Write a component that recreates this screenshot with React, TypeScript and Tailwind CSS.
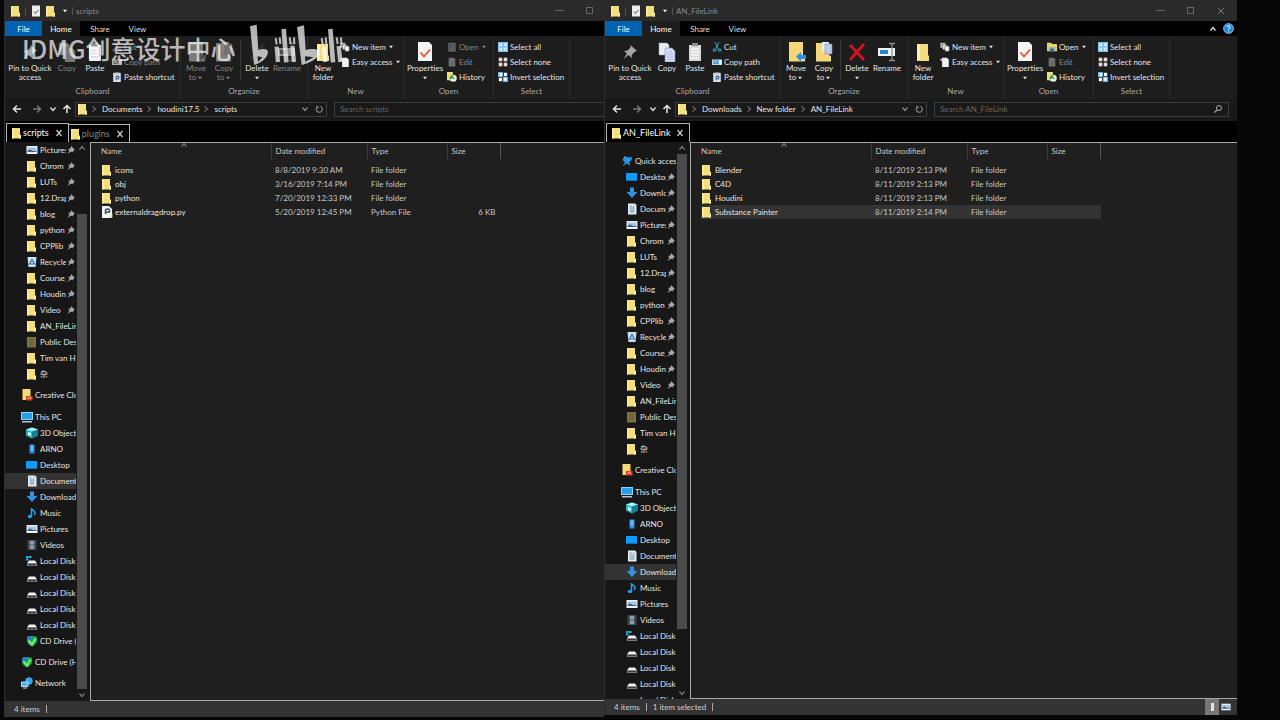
import type { ReactNode } from 'react';
import clsx from 'clsx';

type IconProps = {
  className?: string;
};

type TreeItem = {
  label: string;
  icon: string;
  pinned?: boolean;
  root?: boolean;
};

type FileRow = {
  name: string;
  icon: string;
  date: string;
  type: string;
  size?: string;
};

type ExplorerProps = {
  title: string;
  path: string[];
  tabs: string[];
  tree: TreeItem[];
  treeClassName: string;
  current: string;
  files: FileRow[];
  selectedFile?: string;
  status: string[];
  hasSelection?: boolean;
  covered?: boolean;
  trackClassName: string;
};

// TREE DATA
const pinnedFolders: TreeItem[] = [
  'Chrom',
  'LUTs',
  '12.Drag',
  'blog',
  'python',
  'CPPlib',
].map((label) => ({ label, icon: 'folder', pinned: true }));

const quickAccess: TreeItem[] = [
  { label: 'Pictures', icon: 'pictures', pinned: true },
  ...pinnedFolders,
  { label: 'Recycle', icon: 'recycle', pinned: true },
  { label: 'Course_', icon: 'folder', pinned: true },
  { label: 'Houdini', icon: 'folder', pinned: true },
  { label: 'Video', icon: 'folder', pinned: true },
  { label: 'AN_FileLink', icon: 'folder' },
  { label: 'Public Desk', icon: 'dimFolder' },
  { label: 'Tim van H', icon: 'folder' },
  { label: '杂', icon: 'folder' },
  { label: 'Creative Clo', icon: 'cloud', root: true },
  { label: 'This PC', icon: 'pc', root: true },
  { label: '3D Objects', icon: 'cube' },
  { label: 'ARNO', icon: 'phone' },
  { label: 'Desktop', icon: 'desktop' },
  { label: 'Documents', icon: 'document' },
  { label: 'Downloads', icon: 'download' },
  { label: 'Music', icon: 'music' },
  { label: 'Pictures', icon: 'pictures' },
  { label: 'Videos', icon: 'video' },
  { label: 'Local Disk', icon: 'systemDisk' },
  { label: 'Local Disk', icon: 'disk' },
  { label: 'Local Disk', icon: 'disk' },
  { label: 'Local Disk', icon: 'disk' },
  { label: 'Local Disk', icon: 'disk' },
  { label: 'CD Drive (', icon: 'cd' },
  { label: 'CD Drive (H', icon: 'cd', root: true },
  { label: 'Network', icon: 'network', root: true },
];

const fullTree: TreeItem[] = [
  { label: 'Quick access', icon: 'pin', root: true },
  { label: 'Desktop', icon: 'desktop', pinned: true },
  { label: 'Downloads', icon: 'download', pinned: true },
  { label: 'Documents', icon: 'document', pinned: true },
  ...quickAccess,
];

// FILE DATA
const scriptFiles: FileRow[] = [
  { name: 'icons', icon: 'folder', date: '8/8/2019 9:30 AM', type: 'File folder' },
  { name: 'obj', icon: 'folder', date: '3/16/2019 7:14 PM', type: 'File folder' },
  { name: 'python', icon: 'folder', date: '7/20/2019 12:33 PM', type: 'File folder' },
  {
    name: 'externaldragdrop.py',
    icon: 'python',
    date: '5/20/2019 12:45 PM',
    type: 'Python File',
    size: '6 KB',
  },
];

const linkFiles: FileRow[] = [
  { name: 'Blender', icon: 'folder', date: '8/11/2019 2:13 PM', type: 'File folder' },
  { name: 'C4D', icon: 'folder', date: '8/11/2019 2:13 PM', type: 'File folder' },
  { name: 'Houdini', icon: 'folder', date: '8/11/2019 2:13 PM', type: 'File folder' },
  {
    name: 'Substance Painter',
    icon: 'folder',
    date: '8/11/2019 2:14 PM',
    type: 'File folder',
  },
];

// SMALL ICONS, DRAWN ON A 12 UNIT GRID
const disk = (
  <>
    <path d="M3 5.5h6l2 3H1z" fill="#f2f2f2" />
    <path d="M1 8.3h10v2.7H1z" fill="#8c8c8c" />
    <path d="M2 9.2h8v1H2z" fill="#222" />
  </>
);

const glyphs: Record<string, ReactNode> = {
  folder: (
    <>
      <path d="M1 1h8v6.500l1 .5v3.500H1z" fill="#f3df7c" />
      <path d="M9 7.500l1 .5v3.500H8z" fill="#fff0a8" />
      <path d="M1 1h1.500v10.500H1z" fill="#ffee9f" />
    </>
  ),
  dimFolder: (
    <>
      <path d="M1 1h9v10.500H1z" fill="#7c7444" />
      <path d="M3 2h5v8H3z" fill="#6d673f" />
    </>
  ),
  pictures: (
    <>
      <path d="M.5 2h11v8H.5z" fill="#e9f1f8" />
      <path d="M1.500 3.500h9V7h-9z" fill="#a9c3e0" />
      <path d="M1.500 7 4 5.500l3 1.500h3.500v1h-9z" fill="#3e6385" />
    </>
  ),
  recycle: (
    <>
      <path d="M1.500 1h9l-1 10h-7z" fill="#cfdfea" />
      <path d="m6 3.500 2.500 4.500h-5z" fill="none" stroke="#2676b8" strokeWidth="1.200" />
    </>
  ),
  cloud: (
    <>
      <path d="M1.500 0h8v11h-8z" fill="#f6d977" />
      <path d="M5 7h6.500v4.500H5z" fill="#e0401f" />
      <path d="M6.500 9.500q1.500-2 3.500 0" fill="none" stroke="#fff" strokeWidth=".8" />
    </>
  ),
  pc: (
    <>
      <path d="M0 1h12v8H0z" fill="#8ed3fb" />
      <path d="M1 2h10v6H1z" fill="#259fea" />
      <path d="M1 10h10v1.500H1z" fill="#b9c7d0" />
    </>
  ),
  cube: (
    <>
      <path d="m0 2.500 6-2 6 2v6l-6 3-6-3z" fill="#20b5cf" />
      <path d="m0 2.500 6-2 6 2-6 2z" fill="#a8f2f8" />
      <path d="M6 4.500v7l6-3v-6z" fill="#0f8299" />
      <path d="m2 5 3 1v3L2 8z" fill="#e5fdff" />
    </>
  ),
  phone: (
    <>
      <path d="M3.500 1.500h5v9h-5z" fill="#2d8fe3" />
      <path d="M4.500 2.500h3v5h-3z" fill="#73b9f1" />
    </>
  ),
  desktop: (
    <>
      <path d="M0 2h11v8H0z" fill="#119af6" />
      <path d="M0 9h11v1H0z" fill="#0b6db6" />
    </>
  ),
  document: (
    <>
      <path d="M2 .5h7l1.500 1.500v9.500H2z" fill="#e8eef2" />
      <path d="M3.500 3h2M3.500 5h5M3.500 7h5M3.500 9h5M7 3h1.500" stroke="#5f8fae" strokeWidth="1" />
    </>
  ),
  download: <path d="M4 .5h4V5h3.500L6 11 .5 5H4z" fill="#3391e0" />,
  music: (
    <>
      <path d="M5.500 1v8M5.500 1.500c1 2 3.500 2 3.500 4.500 0 1-.5 1.500-1 2" fill="none" stroke="#1fa0ea" strokeWidth="1.500" />
      <ellipse cx="4" cy="9.500" rx="2.200" ry="1.700" fill="#1fa0ea" />
    </>
  ),
  video: (
    <>
      <path d="M1.500 1h9v10h-9z" fill="#4d545d" />
      <path d="M4 2h4v3.500H4zM4 6.500h4V10H4z" fill="#8f9bb3" />
      <path d="M2.500 1v10M9.500 1v10" stroke="#222" strokeDasharray="1 1" />
    </>
  ),
  disk,
  systemDisk: (
    <>
      <path d="M0 1h2.500v2H0zM3 1h2.500v2H3zM0 3.500h2.500v2H0z" fill="#27b0ea" />
      {disk}
    </>
  ),
  cd: (
    <>
      <path d="M1 2q5-2 10 0v5q-2 3-5 4.500Q2 10 1 6z" fill="#1fa85a" />
      <path d="M1 2q3-1.500 6-1L5 6 1.500 7z" fill="#2d7fc7" />
      <path d="m2.500 5.500 3.500 4 3.500-6" fill="none" stroke="#7cf05c" strokeWidth="2" />
    </>
  ),
  network: (
    <>
      <circle cx="8" cy="4" r="3.700" fill="#3aa3e6" />
      <path d="M0 4.500h7.500V10H0z" fill="#a9dcfa" />
      <path d="M1 5.500h5.500V9H1z" fill="#5ab2ec" />
      <path d="M2 11h4" stroke="#c8d6df" />
    </>
  ),
  pin: (
    <path d="m3.500 1 4 1.500L11 2l-.5 3-2 2 .5 3.500-3-2L1.500 11 4 7.500 1.500 5z" fill="#2596e8" />
  ),
  python: (
    <>
      <path d="M1 0h7l3 3v9H1z" fill="#f4f4f4" />
      <path d="M4.500 7V4.500q0-1.500 2-1.500t2 1.500V6H6Q4.500 6 4.500 8" fill="none" stroke="#31536b" strokeWidth="1.500" />
      <path d="M6 11.500q5.500 0 5.500-5.500v5.500z" fill="#e8dc4a" />
    </>
  ),
  clipCut: (
    <path d="m3.500 0 4 8M8.500 0l-4 8M5 8.500H1.500V11H4zM7 8.500h3.500V11H8z" fill="none" stroke="#3fa1bd" strokeWidth="1.200" />
  ),
  clipPath: (
    <>
      <path d="M0 3h12v6.500H0z" fill="#dcecf8" />
      <path d="M1 4h7v4.500H1z" fill="#3a93d6" />
      <path d="M2 7 4 5l2 2" fill="none" stroke="#fff" />
    </>
  ),
  clipShortcut: (
    <>
      <path d="M1.500 1h9v11h-9z" fill="#dfe3ea" />
      <path d="M4 0h4v2H4z" fill="#8c8c8c" />
      <path d="M5 10V5h3v3H6" fill="none" stroke="#2a4b96" strokeWidth="1.300" />
    </>
  ),
  newItem: (
    <>
      <path d="M.5 1h6v6h-6z" fill="#bdbdbd" />
      <path d="M3 3h5v6H3z" fill="#e6e6e6" stroke="#555" strokeWidth=".6" />
      <path d="M6 5h5v6H6z" fill="#fff" stroke="#555" strokeWidth=".6" />
    </>
  ),
  easyAccess: (
    <>
      <path d="M2.500 1h6l2 2v9h-8z" fill="#f1f1f1" />
      <path d="m0 2 4 .5-2.500 3z" fill="#d7d7d7" />
    </>
  ),
  openFolder: (
    <>
      <path d="M0 1h5l1 1.500h6V11H0z" fill="#e5d45f" />
      <path d="M2 6h8v5H2z" fill="#8fb6c4" />
      <path d="M4 8h4v3H4z" fill="#385f75" />
    </>
  ),
  openDisabled: (
    <>
      <path d="M1.500 1h9v10.500h-9z" fill="#777" />
      <path d="M3 3.500h3M3 6h3M3 8.500h3M8 3.500h1.500M8 6h1.500M8 8.500h1.500" stroke="#333" />
    </>
  ),
  edit: (
    <>
      <path d="M2 1h6l2 2v8.500H2z" fill="#848484" />
      <path d="m5 9 5-5" stroke="#555" strokeWidth="1.200" />
    </>
  ),
  history: (
    <>
      <path d="M0 0h7v10H0z" fill="#f2dd76" />
      <circle cx="7.500" cy="7.500" r="4.200" fill="#eef4ea" />
      <path d="M3.500 9a4 4 0 0 1 4-5.500l-1 4z" fill="#31a042" />
      <path d="M7.500 5.500v2.300h2" fill="none" stroke="#36793b" />
    </>
  ),
  selectAll: (
    <>
      <path d="M0 0h12v12H0z" fill="#7fc0ee" />
      <path d="M1.500 1.500H5V5H1.500zM7 1.500h3.500V5H7zM1.500 7H5v3.500H1.500zM7 7h3.500v3.500H7z" fill="#d3ecfd" />
    </>
  ),
  selectNone: (
    <path d="M1 1h4v4H1zM7 1h4v4H7zM1 7h4v4H1zM7 7h4v4H7z" fill="#f3f0ee" stroke="#a07c74" strokeWidth=".5" />
  ),
  selectInvert: (
    <>
      <path d="M0 0h6v6H0zM6 6h6v6H6z" fill="#6db4e8" />
      <path d="M1.500 1.500H5V5H1.500zM7 1h4v4H7zM1 7h4v4H1zM7 7h3.500v3.500H7z" fill="#eef8ff" />
    </>
  ),
  check: (
    <>
      <path d="M2 .5h8v11H2z" fill="#ececec" />
      <path d="m4 6.500 1.500 2L8.500 5" fill="none" stroke="#555" />
    </>
  ),
};

// LARGE RIBBON ICONS, DRAWN ON A 20 UNIT GRID
const largeGlyphs: Record<string, ReactNode> = {
  pin: (
    <path d="m10.500 3 6.500 6-2 .5-3 3-.5 3.500-3-3L3.500 17l3.500-5.500L4 9l3.500-.5 3-3z" fill="#a6a6a6" />
  ),
  copy: (
    <>
      <path d="M2 1h8l2 2v10H2z" fill="#e9edf4" stroke="#9aa3b5" strokeWidth=".5" />
      <path d="M8 6h7l3 3v11H8z" fill="#cfdcf6" stroke="#7d92c4" strokeWidth=".6" />
      <path d="M10 10h5M10 12.500h6M10 15h6M10 17.500h6" stroke="#a9bce8" strokeWidth=".8" />
    </>
  ),
  paste: (
    <>
      <path d="M4 3h12v16H4z" fill="#d8d8d8" />
      <path d="M7 1h6v3H7z" fill="#8a8a8a" />
      <path d="M6 7h8M6 10h8M6 13h8M6 16h8" stroke="#f8f8f8" strokeWidth="1.500" />
    </>
  ),
  moveTo: (
    <>
      <path d="M3 0h14v14l2 1v4.500H3z" fill="#f5d77a" />
      <path d="M10 14.500 15 10v3h5v4h-5v3z" fill="#2f8fdb" />
    </>
  ),
  copyTo: (
    <>
      <path d="M2 1h13v12l2 1v5.500H2z" fill="#f5d77a" />
      <path d="M8 0h7v9H8z" fill="#e6ebf5" />
      <path d="M11 2h7v10h-7z" fill="#bdcae6" stroke="#8592b5" strokeWidth=".6" />
    </>
  ),
  remove: <path d="m3 3 14 15M17 2 3 18" stroke="#d3121f" strokeWidth="2.800" />,
  rename: (
    <>
      <path d="M1 6h17v8H1z" fill="#eef3f7" />
      <path d="M3 8h8v4H3z" fill="#2a82cf" />
      <path d="M12 1.500h6M15 2v16M12 18.500h6" stroke="#8b8b8b" strokeWidth="1.300" />
    </>
  ),
  newFolder: (
    <>
      <path d="M4 2h11v11l1 1v5H4z" fill="#f3dd82" />
      <path d="M4 2h3v15l-3 2z" fill="#fff0aa" />
    </>
  ),
  properties: (
    <>
      <path d="M3 0h11l3 3v16H3z" fill="#f4f4f4" />
      <path d="m5.500 10.500 3.500 4 6-7" fill="none" stroke="#dd5234" strokeWidth="1.800" />
    </>
  ),
};

const Icon = ({ name, className }: IconProps & { name: string }) => (
  <svg viewBox="0 0 12 12" aria-hidden="true" className={clsx('shrink-0', className)}>
    {glyphs[name]}
  </svg>
);

const PushPin = () => (
  <svg viewBox="0 0 10 10" aria-hidden="true" className="h-[10px] w-[10px] shrink-0">
    <path d="M5 1 9 5 7.500 5.500 6.500 7.500 5 6.500 1.500 9 3.500 5.500 2 4 4.500 3.500z" fill="#a9a9a9" />
  </svg>
);

const Caret = ({ className }: IconProps) => (
  <svg viewBox="0 0 6 4" aria-hidden="true" className={clsx('h-1 w-[6px] shrink-0', className)}>
    <path d="M1 .8h4L3 3.200z" fill="currentColor" />
  </svg>
);

const Chevron = ({ className }: IconProps) => (
  <svg viewBox="0 0 8 8" aria-hidden="true" className={clsx('h-2 w-2 shrink-0', className)}>
    <path d="m1.500 2.500 2.500 3 2.500-3" fill="none" stroke="currentColor" strokeWidth="1.300" />
  </svg>
);

const Arrow = ({ className }: IconProps) => (
  <svg viewBox="0 0 10 10" aria-hidden="true" className={clsx('h-[10px] w-[10px] shrink-0', className)}>
    <path d="M9 5H1.500M5 1.500 1.500 5 5 8.500" fill="none" stroke="currentColor" strokeWidth="1.500" />
  </svg>
);

type RibbonButtonProps = {
  icon: string;
  label: string;
  secondLine?: string;
  menu?: boolean;
  disabled?: boolean;
  fadedIcon?: boolean;
  className: string;
};

const LargeButton = ({
  icon,
  label,
  secondLine,
  menu,
  disabled,
  fadedIcon,
  className,
}: RibbonButtonProps) => (
  <button
    type="button"
    disabled={disabled}
    className={clsx(
      'flex shrink-0 flex-col items-center pt-[6px] leading-[9px] whitespace-nowrap',
      disabled ? 'text-[#858585]' : 'text-[#e4e4e4]',
      className
    )}
  >
    <svg
      viewBox="0 0 20 20"
      aria-hidden="true"
      className={clsx('mb-[2px] h-5 w-5', (disabled || fadedIcon) && 'opacity-50 grayscale')}
    >
      {largeGlyphs[icon]}
    </svg>
    <span>{label}</span>
    <span className="flex h-[9px] items-center gap-px">
      {secondLine}
      {menu && <Caret />}
    </span>
  </button>
);

const SmallButton = ({
  icon,
  label,
  menu,
  disabled,
}: Omit<RibbonButtonProps, 'className'>) => (
  <button
    type="button"
    disabled={disabled}
    className={clsx(
      'flex h-[15px] items-center whitespace-nowrap',
      disabled ? 'text-[#858585]' : 'text-[#e4e4e4]'
    )}
  >
    <Icon
      name={icon}
      className={clsx('mr-[2px] h-[10px] w-[10px]', disabled && 'opacity-80 grayscale')}
    />
    {label}
    {menu && <Caret className="ml-[2px]" />}
  </button>
);

const RibbonGroup = ({
  label,
  className,
  children,
}: {
  label: string;
  className: string;
  children: ReactNode;
}) => (
  <section
    className={clsx(
      'flex shrink-0 flex-col justify-between border-r border-[#2c2c2c] pb-[3px]',
      className
    )}
  >
    <menu className="flex h-12">{children}</menu>
    <h2 className="text-center leading-[10px] text-[#a8a8a8]">{label}</h2>
  </section>
);

const Ribbon = ({ hasSelection }: { hasSelection?: boolean }) => {
  const disabled = !hasSelection;

  return (
    <nav aria-label="Ribbon" className="flex h-[63px] shrink-0 overflow-hidden bg-[#1d1d1d]">
      <RibbonGroup label="Clipboard" className="w-44">
        <LargeButton icon="pin" label="Pin to Quick" secondLine="access" className="ml-[3px] w-11" />
        <LargeButton icon="copy" label="Copy" disabled={disabled} className="ml-px w-7" />
        <LargeButton icon="paste" label="Paste" className="w-7" />
        <menu className="ml-[3px] flex flex-col pt-[3px]">
          <SmallButton icon="clipCut" label="Cut" disabled={disabled} />
          <SmallButton icon="clipPath" label="Copy path" disabled={disabled} />
          <SmallButton icon="clipShortcut" label="Paste shortcut" />
        </menu>
      </RibbonGroup>
      <RibbonGroup label="Organize" className="w-[127px]">
        <LargeButton icon="moveTo" label="Move" secondLine="to" menu disabled={disabled} className="ml-px w-7" />
        <LargeButton icon="copyTo" label="Copy" secondLine="to" menu disabled={disabled} className="w-7" />
        <span className="mx-[2px] mt-1 h-10 w-px bg-[#383838]" />
        <LargeButton icon="remove" label="Delete" menu fadedIcon={disabled} className="w-7" />
        <LargeButton icon="rename" label="Rename" disabled={disabled} className="w-8" />
      </RibbonGroup>
      <RibbonGroup label="New" className="w-24">
        <LargeButton icon="newFolder" label="New" secondLine="folder" className="ml-px w-7" />
        <menu className="ml-[3px] flex flex-col pt-[3px]">
          <SmallButton icon="newItem" label="New item" menu />
          <SmallButton icon="easyAccess" label="Easy access" menu />
        </menu>
      </RibbonGroup>
      <RibbonGroup label="Open" className="w-[90px]">
        <LargeButton icon="properties" label="Properties" menu className="ml-[3px] w-9" />
        <menu className="ml-1 flex flex-col pt-[3px]">
          <SmallButton
            icon={disabled ? 'openDisabled' : 'openFolder'}
            label="Open"
            menu
            disabled={disabled}
          />
          <SmallButton icon="edit" label="Edit" disabled />
          <SmallButton icon="history" label="History" />
        </menu>
      </RibbonGroup>
      <RibbonGroup label="Select" className="w-[76px]">
        <menu className="ml-1 flex flex-col pt-[3px]">
          <SmallButton icon="selectAll" label="Select all" />
          <SmallButton icon="selectNone" label="Select none" />
          <SmallButton icon="selectInvert" label="Invert selection" />
        </menu>
      </RibbonGroup>
    </nav>
  );
};

const TitleBar = ({ title, covered }: { title: string; covered?: boolean }) => (
  <header className="flex h-[21px] shrink-0 items-center bg-[#2b2a2a] pl-[5px] text-[#8a8a8a]">
    <Icon name="folder" className="h-3 w-3" />
    <span className="mx-[3px] h-2 w-px bg-[#555]" />
    <Icon name="check" className="ml-px h-3 w-3" />
    <Icon name="folder" className="ml-[3px] h-3 w-3" />
    <Caret className="mr-px ml-[5px] text-white" />
    <span className="mx-[3px] h-2 w-px bg-[#555]" />
    <h1 className="flex-1">{title}</h1>
    <menu className="flex items-center text-[#777]">
      <button type="button" aria-label="Minimize" className="flex h-5 w-[30px] items-center justify-center">
        <span className="h-px w-[9px] bg-[#666]" />
      </button>
      <button type="button" aria-label="Maximize" className="flex h-5 w-[30px] items-center justify-center">
        <span className="h-[7px] w-[7px] border border-[#666]" />
      </button>
      {!covered && (
        <button type="button" aria-label="Close" className="flex h-5 w-8 items-center justify-center">
          <svg viewBox="0 0 8 8" aria-hidden="true" className="h-2 w-2">
            <path d="m1 1 6 6M7 1 1 7" stroke="currentColor" />
          </svg>
        </button>
      )}
    </menu>
  </header>
);

const MenuTabs = ({ covered }: { covered?: boolean }) => (
  <nav aria-label="Menu" className="flex h-[15px] shrink-0 items-stretch bg-black text-[#dedede]">
    <button type="button" className="w-[37px] bg-[#0063b1] text-white">
      File
    </button>
    <button type="button" className="w-[38px] bg-[#1d1d1d] text-white">
      Home
    </button>
    <button type="button" className="w-10">
      Share
    </button>
    <button type="button" className="w-[35px]">
      View
    </button>
    {!covered && (
      <menu className="ml-auto flex items-center gap-[6px] pr-[3px]">
        <button type="button" aria-label="Collapse ribbon">
          <Chevron className="rotate-180" />
        </button>
        <button type="button" aria-label="Help">
          <svg viewBox="0 0 12 12" aria-hidden="true" className="h-[11px] w-[11px]">
            <circle cx="6" cy="6" r="5.300" fill="#1a86d8" stroke="#a7d6f7" strokeWidth="1" />
            <path d="M4.300 4.600a1.700 1.700 0 1 1 2.500 1.500q-.8.400-.8 1.200M6 8.300v1.100" fill="none" stroke="#fff" strokeWidth="1.100" />
          </svg>
        </button>
      </menu>
    )}
  </nav>
);

const AddressBar = ({
  path,
  title,
  covered,
}: {
  path: string[];
  title: string;
  covered?: boolean;
}) => (
  <nav
    aria-label="Address"
    className={clsx(
      'flex h-[22px] shrink-0 items-center bg-[#191919] pb-[2px] pl-[7px] text-[#e4e4e4]',
      covered ? 'pr-0' : 'pr-2'
    )}
  >
    <button type="button" aria-label="Back">
      <Arrow />
    </button>
    <button type="button" aria-label="Forward" className="ml-[10px] text-[#777]">
      <Arrow className="rotate-180" />
    </button>
    <button type="button" aria-label="Recent locations" className="ml-[7px]">
      <Chevron />
    </button>
    <button type="button" aria-label="Up" className="ml-[5px]">
      <Arrow className="rotate-90" />
    </button>
    <ol className="ml-[3px] flex h-[15px] w-[252px] shrink-0 items-center border border-[#3d3d3d] pr-[3px] pl-px">
      <Icon name="folder" className="mr-px h-3 w-3" />
      {path.map((part) => (
        <li key={part} className="flex items-center">
          <Chevron className="mr-1 -rotate-90 text-[#666]" />
          <a href="#" className="mr-[3px]">
            {part}
          </a>
        </li>
      ))}
      <li className="ml-auto flex items-center gap-[6px] text-[#8a8a8a]">
        <button type="button" aria-label="Previous locations">
          <Chevron />
        </button>
        <button type="button" aria-label="Refresh">
          <svg viewBox="0 0 8 8" aria-hidden="true" className="h-2 w-2">
            <path d="M5.500 1.500A3 3 0 1 1 2 2.300M2 .5v2h2" fill="none" stroke="currentColor" strokeWidth="1.100" />
          </svg>
        </button>
      </li>
    </ol>
    <label
      className={clsx(
        'ml-[7px] flex h-[15px] min-w-0 flex-1 items-center border border-[#3d3d3d] px-[5px]',
        covered && 'border-r-0'
      )}
    >
      <input
        type="text"
        aria-label={`Search ${title}`}
        placeholder={`Search ${title}`}
        className="min-w-0 flex-1 bg-transparent outline-none placeholder:text-[#666]"
      />
      {!covered && (
        <svg viewBox="0 0 10 10" aria-hidden="true" className="h-[10px] w-[10px]">
          <circle cx="6" cy="4" r="2.500" fill="none" stroke="#aaa" />
          <path d="M4.200 5.800 1.500 8.500" stroke="#aaa" strokeWidth="1.200" />
        </svg>
      )}
    </label>
  </nav>
);

const FolderTabs = ({ tabs }: { tabs: string[] }) => (
  <menu className="flex h-[21px] shrink-0 items-end bg-black pl-px">
    {tabs.map((tab, index) => (
      <li
        key={tab}
        className={clsx(
          'flex items-center border border-b-0 border-[#b5b5b5] pr-[5px] text-[9px]',
          index === 0 ? 'h-[19px] pl-1 text-white' : 'h-[18px] border-l-0 pl-px text-[#858585]'
        )}
      >
        <Icon name="folder" className="h-3 w-3" />
        <button type="button">{tab}</button>
        <button type="button" aria-label={`Close ${tab}`} className="ml-[6px] text-[#ccc]">
          <svg viewBox="0 0 8 8" aria-hidden="true" className="h-2 w-2">
            <path d="m1.500 1 5 6M6.500 1l-5 6" stroke="currentColor" strokeWidth="1.200" />
          </svg>
        </button>
      </li>
    ))}
  </menu>
);

const FolderTree = ({
  tree,
  treeClassName,
  current,
  trackClassName,
}: Pick<ExplorerProps, 'tree' | 'treeClassName' | 'current' | 'trackClassName'>) => (
  <aside className="flex w-[85px] shrink-0 bg-[#171717]">
    <ul className={clsx('mr-px w-[71px] overflow-hidden', treeClassName)}>
      {tree.map((item, index) => (
        <li
          key={index}
          className={clsx(
            'flex h-4 items-center overflow-hidden whitespace-nowrap',
            item.root ? 'pl-4' : 'pl-[21px]',
            item.root && index > 0 && 'mt-[5px]',
            item.icon === 'pc' && 'mt-[6px]',
            item.label === current && !item.pinned && 'bg-[#333]'
          )}
        >
          <Icon name={item.icon} className="mr-[2px] h-3 w-3" />
          <a href="#" className="min-w-0 flex-1 overflow-hidden">
            {item.label}
          </a>
          {item.pinned && <PushPin />}
        </li>
      ))}
    </ul>
    <div className="flex w-[10px] flex-col items-center text-[#777]">
      <Chevron className="my-[2px] rotate-180" />
      <div className={clsx('min-h-0 w-full flex-1', trackClassName)}>
        <div className="h-full w-full bg-[#4b4b4b]" />
      </div>
      <Chevron className="my-[2px]" />
    </div>
  </aside>
);

const FileTable = ({
  files,
  selectedFile,
}: Pick<ExplorerProps, 'files' | 'selectedFile'>) => (
  <div className="min-w-0 flex-1 overflow-hidden border border-r-0 border-[#a8a8a8] bg-[#1f1f1f] pl-[10px]">
    <table className="w-[400px] table-fixed text-left">
      <thead className="text-[#c8c8c8]">
        <tr className="h-4">
          <th className="w-[170px] border-r border-[#3c3c3c] font-normal">
            <span className="flex">
              Name
              <Chevron className="-mt-1 ml-[58px] rotate-180 text-[#777]" />
            </span>
          </th>
          <th className="w-24 border-r border-[#3c3c3c] pl-1 font-normal">Date modified</th>
          <th className="w-20 border-r border-[#3c3c3c] pl-1 font-normal">Type</th>
          <th className="border-r border-[#555] pl-1 font-normal">Size</th>
        </tr>
      </thead>
      <tbody className="before:block before:h-1">
        {files.map((file) => (
          <tr
            key={file.name}
            className={clsx('h-[14px]', file.name === selectedFile && 'bg-[#333]')}
          >
            <td className="p-0">
              <span className="flex items-center">
                <Icon name={file.icon} className="mr-[2px] h-3 w-3" />
                {file.name}
              </span>
            </td>
            <td className="pl-1 text-[#c8c8c8]">{file.date}</td>
            <td className="pl-1 text-[#c8c8c8]">{file.type}</td>
            <td className="pr-[5px] text-right text-[#c8c8c8]">{file.size}</td>
          </tr>
        ))}
      </tbody>
    </table>
  </div>
);

const Explorer = ({
  title,
  path,
  tabs,
  tree,
  treeClassName,
  current,
  files,
  selectedFile,
  status,
  hasSelection,
  covered,
  trackClassName,
}: ExplorerProps) => (
  <main className="flex min-h-0 min-w-0 flex-col border-l border-[#2e2e2e] text-[#e4e4e4]">
    <TitleBar title={title} covered={covered} />
    <MenuTabs covered={covered} />
    <Ribbon hasSelection={hasSelection} />
    <AddressBar path={path} title={title} covered={covered} />
    <FolderTabs tabs={tabs} />
    <div className="flex min-h-0 flex-1">
      <FolderTree
        tree={tree}
        treeClassName={treeClassName}
        current={current}
        trackClassName={trackClassName}
      />
      <FileTable files={files} selectedFile={selectedFile} />
    </div>
    <footer className="flex h-4 shrink-0 items-center bg-[#333] pl-[9px] text-[#d0d0d0]">
      {status.map((text) => (
        <span key={text} className="mr-[6px] flex items-center">
          {text}
          <span className="ml-[6px] h-2 w-px bg-[#aaa]" />
        </span>
      ))}
      {!covered && (
        <menu className="ml-auto flex h-full pr-1">
          <button type="button" aria-label="Details view" className="flex w-[14px] items-center justify-center bg-[#777]">
            <span className="h-2 w-[3px] bg-[#e6e6e6]" />
          </button>
          <button type="button" aria-label="Large icons view" className="flex w-[14px] items-center justify-center">
            <Icon name="pictures" className="h-[10px] w-[10px]" />
          </button>
        </menu>
      )}
    </footer>
  </main>
);

const Watermark = () => (
  <div className="pointer-events-none absolute top-6 left-[22px] flex items-center text-white/70">
    <span className="w-[228px] font-['Noto_Sans_CJK_SC',sans-serif] text-[25px] leading-[30px] font-medium whitespace-nowrap">
      IDMG创意设计中心
    </span>
    <svg
      viewBox="0 0 300 132"
      aria-label="bilibili"
      className="mb-1 h-11 w-[100px]"
      fill="none"
      stroke="currentColor"
    >
      <path
        d="M0 7 20 2l5 76c20-6 32-2 28 11-4 15-22 29-41 34zM23 97l1 16 14-13z"
        fill="currentColor"
        fillRule="evenodd"
        stroke="none"
      />
      <path d="m80 68 4 46M127 66l5 48" strokeWidth="13" />
      <path d="m101 15 8 100" strokeWidth="14" />
      <path d="m77 42 3 19M89 40l2 20M119 40l3 20M132 40l1 20" strokeWidth="6" />
      <path
        d="m141 9 21-5 5 74c22-6 45-2 41 11-4 15-32 29-53 34zM165 97l1 16 24-13z"
        fill="currentColor"
        fillRule="evenodd"
        stroke="none"
      />
      <path d="m222 68 4 46M266 66l5 48" strokeWidth="13" />
      <path d="m241 15 8 100" strokeWidth="14" />
      <path d="m215 42 3 19M227 40l2 20M260 40l3 20M273 40l1 20" strokeWidth="6" />
    </svg>
  </div>
);

const App = () => {
  return (
    <div className="relative grid h-screen grid-cols-[minmax(0,600fr)_minmax(0,633fr)] overflow-hidden bg-[#070707] pr-[43px] pl-1 font-[Lato,'Noto_Sans_CJK_SC',sans-serif] text-[8px] leading-[12px]">
      <div className="grid min-h-0 pb-[3px]">
        <Explorer
          title="scripts"
          path={['Documents', 'houdini17.5', 'scripts']}
          tabs={['scripts', 'plugins']}
          tree={quickAccess}
          treeClassName=""
          current="Documents"
          files={scriptFiles}
          status={['4 items']}
          covered
          trackClassName="pt-[60px]"
        />
      </div>
      <div className="grid min-h-0 pb-[5px]">
        <Explorer
          title="AN_FileLink"
          path={['Downloads', 'New folder', 'AN_FileLink']}
          tabs={['AN_FileLink']}
          tree={fullTree}
          treeClassName="pt-[11px]"
          current="Downloads"
          files={linkFiles}
          selectedFile="Substance Painter"
          status={['4 items', '1 item selected']}
          hasSelection
          trackClassName="pb-[58px]"
        />
      </div>
      <Watermark />
    </div>
  );
};

export default App;
